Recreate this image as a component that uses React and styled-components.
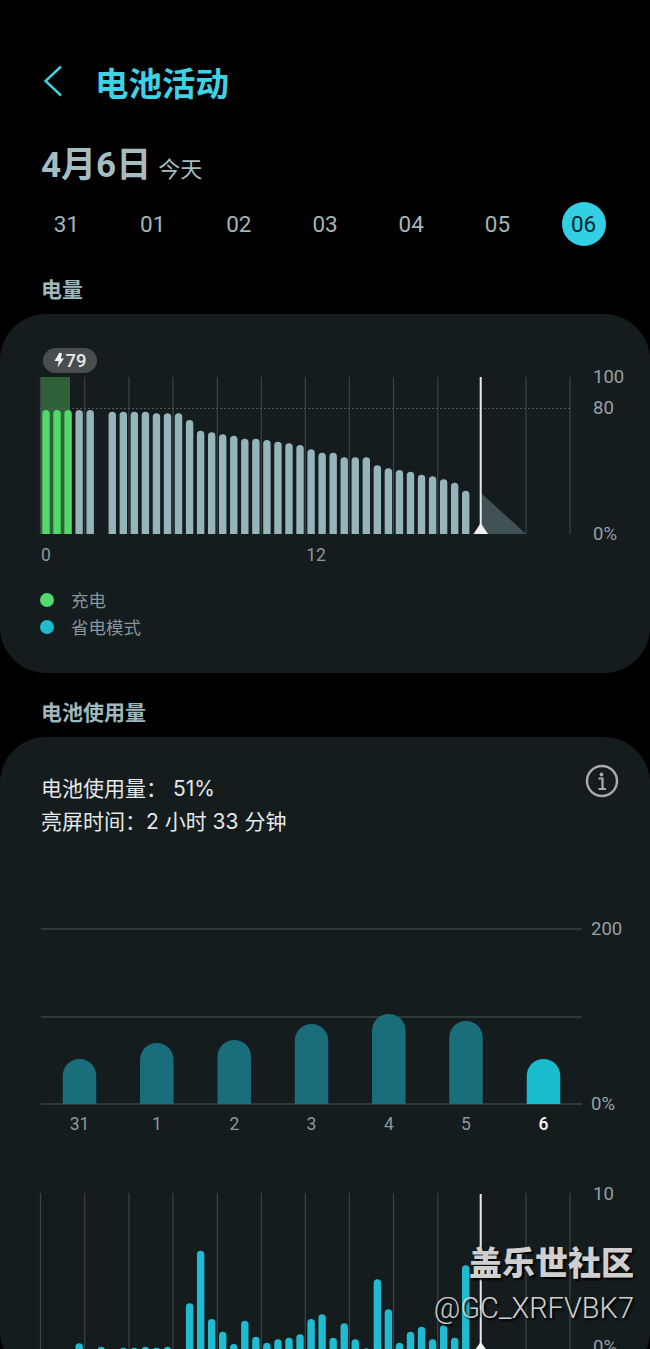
import React from "react";
import styled, { createGlobalStyle } from "styled-components";

const Global = createGlobalStyle`
  html, body { margin: 0; padding: 0; background: #000; }
  body { font-family: Roboto, "Noto Sans CJK SC", sans-serif; }
`;
const Page = styled.div`
  position: relative;
  width: 650px;
  height: 1349px;
  overflow: hidden;
  background: #000;
  display: flex;
  flex-direction: column;
`;
const Header = styled.header`
  display: flex;
  align-items: center;
  height: 44px;
  margin-top: 63px;
  padding-left: 43px;
  gap: 32px;
`;
const BackIcon = styled.svg`
  width: 20px;
  height: 32px;
  flex: none;
  margin-top: -8px;
`;
const Title = styled.h1`
  margin: 0;
  font-size: 33.5px;
  line-height: 44px;
  font-weight: 700;
  color: #3ed2e4;
`;
const DateLine = styled.div`
  display: flex;
  align-items: baseline;
  gap: 7px;
  height: 42px;
  margin-top: 38px;
  padding-left: 41px;
  line-height: 42px;
`;
const DateMain = styled.span`
  font-size: 35px;
  font-weight: 700;
  color: #a5bdc1;
`;
const DateSub = styled.span`
  font-size: 22px;
  color: #a5bdc1;
`;
const Days = styled.div`
  display: flex;
  height: 44px;
  margin-top: 15px;
  padding-left: 44.5px;
`;
const Day = styled.div`
  width: 44px;
  height: 44px;
  margin-right: 42.2px;
  flex: none;
  display: flex;
  align-items: center;
  justify-content: center;
  border-radius: 50%;
  font-size: 22.5px;
  color: ${(p) => (p.$active ? "#06262b" : "#a5b5b8")};
  background: ${(p) => (p.$active ? "#33cfe4" : "transparent")};
`;
const Section = styled.h2`
  margin: ${(p) => p.$top}px 0 ${(p) => p.$bottom}px;
  padding-left: 41px;
  font-size: 21px;
  line-height: 28px;
  font-weight: 700;
  color: #9fb8bc;
`;
const Card = styled.section`
  padding-top: ${(p) => p.$pad}px;
  background: #141c1e;
  border-radius: 46px;
  flex: none;
  height: ${(p) => p.$height}px;
  box-sizing: border-box;
`;
const ChartSvg = styled.svg`
  display: block;
  flex: none;
  width: 650px;
  margin-top: ${(p) => p.$top || 0}px;
  font-family: Roboto, sans-serif;
`;
const Legend = styled.ul`
  list-style: none;
  margin: 16px 0 0;
  padding: 0 0 0 40px;
`;
const LegendRow = styled.li`
  display: flex;
  align-items: center;
  gap: 17px;
  height: 27px;
  font-size: 17.5px;
  color: #87959a;
`;
const Dot = styled.span`
  width: 14px;
  height: 14px;
  border-radius: 50%;
  background: ${(p) => p.$color};
`;
const Summary = styled.div`
  display: flex;
  justify-content: space-between;
  padding: 0 31px 0 41px;
`;
const SummaryText = styled.div`
  font-family: Inter, "Noto Sans CJK SC", sans-serif;
  font-size: 21px;
  line-height: 33px;
  color: #e4e8e8;
`;
const InfoIcon = styled.svg`
  width: 34px;
  height: 34px;
  margin-top: -8px;
  flex: none;
`;
const Watermark = styled.div`
  position: absolute;
  right: 16px;
  top: 1242px;
  text-align: right;
  color: #cfcfcf;
  text-shadow: 2px 2px 2px #000;
`;
const MarkTitle = styled.div`
  font-size: 33px;
  line-height: 44px;
  font-weight: 900;
`;
const MarkId = styled.div`
  margin-top: 4px;
  font-size: 29px;
  line-height: 36px;
  font-weight: 300;
  font-family: Roboto, sans-serif;
`;

const barX = (i) => 46 + i * 11.045;
const gridX = [40.5, 84.7, 129, 173, 217.3, 261.3, 305.3, 349.3, 393.5, 437.7, 526, 570];

const levelTops = [
  210, 210, 210, 210, 210, null, 215, 215, 215, 215, 220, 220, 220, 240, 272, 277, 283, 287, 296, 296, 300, 305, 310,
  315, 328, 338, 338, 352, 352, 352, 376, 385, 390, 395, 404, 409, 418, 428, 452,
];
const usageTops = [
  null, null, null, 490, null, 500, null, 503, 503, 500, 503, 500, null, 370, 212, 417, 455, 492, 422, 470, 488, 478,
  473, 463, 417, 403, 473, 430, 478, 505, 298, 388, 488, 455, 440, 478, 436, 473, 256,
];

const Bar = ({ x, top, bottom, w, fill, r }) => (
  <path
    d={`M${x - w / 2} ${bottom}V${top + r}a${r} ${r} 0 0 1 ${w} 0V${bottom}Z`}
    fill={fill}
  />
);

const LevelChart = () => (
  <ChartSvg $top={0} height="230" viewBox="0 340 650 230">
    <rect x="40" y="377" width="30" height="157" fill="#2f6138" />
    {gridX.map((x) => (
      <line key={x} x1={x} x2={x} y1="377" y2="534" stroke="#3c4345" strokeWidth="1.2" />
    ))}
    <line x1="40" x2="570" y1="408.5" y2="408.5" stroke="#50595b" strokeWidth="1.2" strokeDasharray="2 2" />
    <path d="M481 493L526 534H481Z" fill="#415254" />
    {levelTops.map((t, i) =>
      t === null ? null : (
        <Bar
          key={i}
          x={barX(i)}
          top={340 + t / 3}
          bottom={534}
          w={7.4}
          r={3.7}
          fill={i < 3 ? "#53d86c" : "#96b5ba"}
        />
      )
    )}
    <line x1="480.7" x2="480.7" y1="377" y2="530" stroke="#e8ecec" strokeWidth="2" />
    <path d="M480.7 523L488 534H473.5Z" fill="#f1f3f3" />
    <rect x="43" y="348" width="54" height="25" rx="12.5" fill="#4a4d50" />
    <path d="M59.500 352.500L62 353.500L60.800 358.500H64L57.500 367.500L58.800 361H54.500Z" fill="#f2f2f2" />
    <text x="65.500" y="367" fontSize="18.500" fontWeight="500" fill="#e8e8e8">79</text>
    <text x="46" y="560.500" fontSize="17.500" textAnchor="middle" fill="#8f989b">0</text>
    <text x="316" y="560.500" fontSize="17.500" textAnchor="middle" fill="#8f989b">12</text>
    <text x="593" y="382.500" fontSize="18.500" fill="#98a0a2">100</text>
    <text x="593" y="413.800" fontSize="18.500" fill="#98a0a2">80</text>
    <text x="593" y="540" fontSize="18.500" fill="#98a0a2">0%</text>
  </ChartSvg>
);

const weekly = [
  { label: "31", x: 79.500, top: 1059 },
  { label: "1", x: 156.800, top: 1043 },
  { label: "2", x: 234.300, top: 1040 },
  { label: "3", x: 311.500, top: 1024 },
  { label: "4", x: 388.800, top: 1014 },
  { label: "5", x: 466, top: 1021 },
  { label: "6", x: 543.500, top: 1059, active: true },
];

const WeekChart = () => (
  <ChartSvg $top={62} height="240" viewBox="0 900 650 240">
    {[929, 1017, 1104].map((y) => (
      <line key={y} x1="41" x2="582" y1={y} y2={y} stroke="#3a4345" strokeWidth="1.600" />
    ))}
    {weekly.map((d) => (
      <g key={d.label}>
        <Bar x={d.x} top={d.top} bottom={1104} w={33.500} r={16.700} fill={d.active ? "#17bccd" : "#1a6e7b"} />
        <text
          x={d.x}
          y="1130"
          fontSize="17.500"
          textAnchor="middle"
          fontWeight={d.active ? 500 : 400}
          fill={d.active ? "#f2f4f4" : "#8f989b"}
        >
          {d.label}
        </text>
      </g>
    ))}
    <text x="591" y="934.500" fontSize="18.500" fill="#98a0a2">200</text>
    <text x="591" y="1109.500" fontSize="18.500" fill="#98a0a2">0%</text>
  </ChartSvg>
);

const UsageChart = () => (
  <ChartSvg $top={40} height="169" viewBox="0 1180 650 169">
    {gridX.map((x) => (
      <line key={x} x1={x} x2={x} y1="1193" y2="1349" stroke="#3c4345" strokeWidth="1.200" />
    ))}
    {usageTops.map((t, i) =>
      t === null ? null : (
        <Bar key={i} x={barX(i)} top={1180 + t / 3} bottom={1349} w={7.400} r={3.700} fill="#1fbbd0" />
      )
    )}
    <line x1="480.700" x2="480.700" y1="1194" y2="1349" stroke="#e8ecec" strokeWidth="2" />
    <path d="M480.700 1342L488 1352H473.500Z" fill="#f1f3f3" />
    <text x="593" y="1199.500" fontSize="18.500" fill="#98a0a2">10</text>
    <text x="593" y="1353" fontSize="18.500" fill="#98a0a2">0%</text>
  </ChartSvg>
);

const days = ["31", "01", "02", "03", "04", "05", "06"];

export default function App() {
  return (
    <Page>
      <Global />
      <Header>
        <BackIcon viewBox="0 0 20 32" fill="none" stroke="#3ed2e4" strokeWidth="2.400">
          <path d="M18 1.500L2.500 16L18 30.500" />
        </BackIcon>
        <Title>电池活动</Title>
      </Header>
      <DateLine>
        <DateMain>4月6日</DateMain>
        <DateSub>今天</DateSub>
      </DateLine>
      <Days>
        {days.map((d) => (
          <Day key={d} $active={d === "06"}>
            {d}
          </Day>
        ))}
      </Days>
      <Section $top={30} $bottom={10}>电量</Section>
      <Card $pad={26} $height={359}>
        <LevelChart />
        <Legend>
          <LegendRow>
            <Dot $color="#53d86c" />
            充电
          </LegendRow>
          <LegendRow>
            <Dot $color="#1fbbd0" />
            省电模式
          </LegendRow>
        </Legend>
      </Card>
      <Section $top={26} $bottom={10}>电池使用量</Section>
      <Card $pad={35} $height={640}>
        <Summary>
          <SummaryText>
            电池使用量： 51%
            <br />
            亮屏时间：2 小时 33 分钟
          </SummaryText>
          <InfoIcon viewBox="0 0 34 34" fill="none">
            <circle cx="17" cy="17" r="15" stroke="#a6acad" strokeWidth="2.400" />
            <circle cx="16.500" cy="10.500" r="1.900" fill="#a6acad" />
            <path d="M13.500 14.500H17.500V24.500M13.500 25H21" stroke="#a6acad" strokeWidth="2.200" />
          </InfoIcon>
        </Summary>
        <WeekChart />
        <UsageChart />
      </Card>
      <Watermark>
        <MarkTitle>盖乐世社区</MarkTitle>
        <MarkId>@GC_XRFVBK7</MarkId>
      </Watermark>
    </Page>
  );
}
